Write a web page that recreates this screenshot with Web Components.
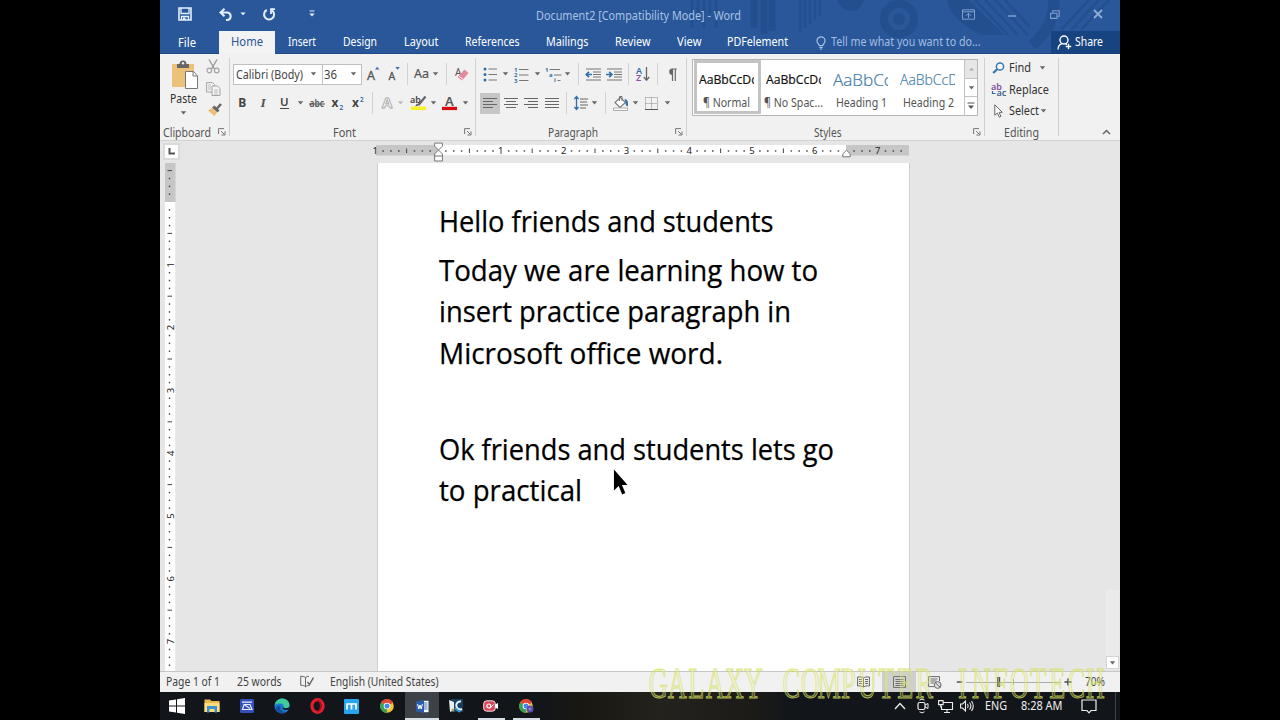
<!DOCTYPE html>
<html lang="en">
<head>
<meta charset="utf-8">
<title>Document2 - Word</title>
<style>
  body {
    margin: 0;
    width: 1280px;
    height: 720px;
    overflow: hidden;
    background: #000;
    font-family: "Noto Sans", "Open Sans", sans-serif;
    font-size: 12px;
    color: #444;
  }
</style>
</head>
<body>
<word-window></word-window>

<script>
// icons: [width, height, markup]
const T = 'font-family="Noto Sans,sans-serif"';
const ICONS = {
  sep: [1, 22, '<path d="M.5 0v22" stroke="#d2d2d2"/>'],
  arrow: [7, 4, '<path d="M.8 .3h5.4L3.5 3.4z" fill="#666"/>'],
  arrowLight: [7, 4, '<path d="M.8 .3h5.4L3.5 3.4z" fill="#bbb"/>'],
  arrowWhite: [6, 4, '<path d="M.3 .5h5.4L3 3.3z" fill="#e8f2ff"/>'],
  launcher: [8, 8, '<path d="M.6 6V.6H6M3 3l3.5 3.5M7 3.4V7H3.4" fill="none" stroke="#777"/>'],
  save: [14, 14, '<path d="M1 1h12v12H1z" fill="none" stroke="#e3f1ff" stroke-width="1.6"/><path d="M3 1v5.5h8V1M3.5 13V9.500h7V13" fill="none" stroke="#e3f1ff" stroke-width="1.3"/><path d="M5 10.5h2.5V13H5z" fill="#e3f1ff"/>'],
  undo: [14, 13, '<path d="M5.5 .8L1.5 4.5l4 3.7M2 4.5h6.5a3.8 3.8 0 0 1 0 7.5H7" fill="none" stroke="#e3f1ff" stroke-width="2"/>'],
  redo: [14, 13, '<path d="M4.8 2A5 5 0 1 0 10 2.4" fill="none" stroke="#e3f1ff" stroke-width="2"/><path d="M13 1.2H9V6" fill="none" stroke="#e3f1ff" stroke-width="1.8"/>'],
  customize: [6, 8, '<path d="M.5 1h5" stroke="#e3f1ff"/><path d="M.3 3.5h5.4L3 6.5z" fill="#e3f1ff"/>'],
  ribbonOpts: [13, 11, '<path d="M.5 .8h12v9.4H.5zM.5 2.8h12M6.5 9V4.5M4 6.8l2.5-2.5L9 6.8" fill="none" stroke="#7f9fcd"/>'],
  minimize: [8, 10, '<path d="M0 7h8" stroke="#7f9fcd" stroke-width="1.5"/>'],
  restore: [10, 9, '<path d="M.6 3.2h6.4v5.200H.6zM2.8 3V.8h6.400v5.400H7.2" fill="none" stroke="#7f9fcd" stroke-width="1.1"/>'],
  close: [10, 10, '<path d="M1 1l8 8M9 1L1 9" stroke="#8dabd6" stroke-width="1.9"/>'],
  bulb: [10, 14, '<path d="M3.2 9.5C3 8 1 7.5 1 4.8a4 4 0 0 1 8 0C9 7.5 7 8 6.8 9.5zM3.3 11.3h3.4M3.8 13h2.4" fill="none" stroke="#a9c3e6" stroke-width="1.2"/>'],
  share: [15, 15, '<circle cx="7" cy="5" r="4" fill="none" stroke="#fff" stroke-width="1.4"/><path d="M1 14.5c.2-4 2-5.3 4-5.8M8.5 8.6l1.5 1M11.5 8.8v5.4M8.8 11.5h5.4" fill="none" stroke="#fff" stroke-width="1.3"/>'],
  paste: [28, 30, '<path d="M1 4h22v23H1z" fill="#ecc27a"/><path d="M6 4h12v4H6z" fill="#666"/><path d="M8.5 4a3.5 3.5 0 0 1 7 0z" fill="#666"/><circle cx="12" cy="3.3" r="1.2" fill="#eee"/><path d="M14.5 11.5h8l4 4.5v12.5h-12z" fill="#fff" stroke="#777"/><path d="M22 11.5V16h4.5" fill="none" stroke="#777"/>'],
  cut: [14, 15, '<path d="M3 .5l5.5 9.5M11 .5L5.5 10" stroke="#999" stroke-width="1.4"/><circle cx="3.3" cy="11.5" r="2.3" fill="none" stroke="#a5a5a5" stroke-width="1.2"/><circle cx="10.7" cy="11.5" r="2.3" fill="none" stroke="#a5a5a5" stroke-width="1.2"/>'],
  copy: [15, 14, '<path d="M.6.6h6L8.5 2.5v7.5H.6z" fill="#f4f4f4" stroke="#a3a3a3"/><path d="M6 4h5.5L14 6.5v7H6z" fill="#f4f4f4" stroke="#a3a3a3"/><path d="M2 3h3M2 5h3M2 7h3M8 8h4M8 10h4M8 12h4" stroke="#b0b0b0" stroke-width=".8"/>'],
  painter: [15, 14, '<path d="M1 7.5L5 5l5 4.5L7.5 13z" fill="#ecbd72"/><path d="M5 4.5L7.5 2.5l5 5L10.5 9.5z" fill="#666"/><path d="M10 5.5L14 1" stroke="#666" stroke-width="2.5"/>'],
  growFont: [13, 16, `<text x="1" y="13.500" ${T} font-size="12.5" fill="#555" stroke="#555" stroke-width=".3">A</text><path d="M9 3.500h4.400L11.200.8z" fill="#3a6ea5"/>`],
  shrinkFont: [12, 16, `<text x="1.500" y="13.500" ${T} font-size="10.5" fill="#555" stroke="#555" stroke-width=".3">A</text><path d="M8.400 1h4.400L10.600 3.700z" fill="#3a6ea5"/>`],
  changeCase: [15, 14, `<text x="0" y="11" ${T} font-size="12" fill="#555" stroke="#555" stroke-width=".2" textLength="15" lengthAdjust="spacingAndGlyphs">Aa</text>`],
  eraser: [14, 15, `<text x="0" y="9" ${T} font-size="10" fill="#555">A</text><path d="M9.5 2.5l4 3.5L7 13.5 2.5 10z" fill="#e58a9d"/><path d="M3.5 8.8l4.7 3.7" stroke="#fff" stroke-width=".8"/>`],
  bold: [9, 14, `<text x="0.3" y="11" ${T} font-size="12" font-weight="700" fill="#444">B</text>`],
  italic: [7, 14, '<text x="0.500" y="11" font-family="Liberation Serif,serif" font-size="13.5" font-weight="700" font-style="italic" fill="#555">I</text>'],
  underline: [9, 14, `<text x="0" y="10" ${T} font-size="11.5" font-weight="600" fill="#444">U</text><path d="M0 12.500h9" stroke="#444"/>`],
  strike: [16, 14, `<text x=".5" y="11" ${T} font-size="10" font-weight="600" fill="#555" textLength="14.5" lengthAdjust="spacingAndGlyphs">abc</text><path d="M0 8h16" stroke="#555"/>`],
  subscript: [12, 14, `<text x="-.5" y="11" ${T} font-size="12" font-weight="700" fill="#444">x</text><text x="7.500" y="13.5" ${T} font-size="6.5" font-weight="600" fill="#2d66a8">2</text>`],
  superscript: [12, 14, `<text x="0" y="11" ${T} font-size="12" font-weight="700" fill="#444">x</text><text x="8" y="6" ${T} font-size="6.5" font-weight="600" fill="#2d66a8">2</text>`],
  effects: [13, 14, '<text x="1" y="12" font-family="Open Sans,sans-serif" font-size="15" font-weight="700" fill="#f8f8f8" stroke="#aaa" stroke-width=".9">A</text>'],
  highlight: [17, 16, `<text x="0" y="8" ${T} font-size="9" font-weight="600" fill="#444">ab</text><path d="M15.5 1.5L8.5 10" stroke="#666" stroke-width="2.2"/><path d="M5 11.5l2-3 2 1.8z" fill="#555"/><path d="M1 11.500h15v3.600H1z" fill="#f6f22a"/>`],
  fontColor: [15, 16, `<text x="3" y="11" ${T} font-size="13" font-weight="600" fill="#555">A</text><path d="M0 11.8h15v3.3H0z" fill="#d80c10"/>`],
  bullets: [14, 15, '<g fill="#2f6faa"><circle cx="2" cy="2" r="1.5"/><circle cx="2" cy="7.5" r="1.5"/><circle cx="2" cy="13" r="1.5"/></g><path d="M5.5 2H14M5.5 7.5H14M5.5 13H14" stroke="#777" stroke-width="1.2"/>'],
  numbering: [15, 15, `<g ${T} font-size="6" font-weight="700" fill="#2f6faa"><text x="0" y="4.5">1</text><text x="0" y="10">2</text><text x="0" y="15.5">3</text></g><path d="M5 2.5h9.5M5 8h9.5M5 13.5h9.5" stroke="#777"/>`],
  multilevel: [17, 15, `<g ${T} font-size="6" font-weight="700" fill="#2f6faa"><text x="0" y="4.5">1</text><text x="4" y="10">a</text><text x="9" y="15">i</text></g><path d="M4.5 2.5H15M9 8h7.5M12.5 13.5h3" stroke="#777"/>`],
  outdent: [16, 13, '<path d="M1 1h15M8 4h8M8 6.5h8M8 9h8M1 12h15" stroke="#777" stroke-width="1.1"/><path d="M7 6.5H1.5M4 3.8L1.3 6.5 4 9.2" fill="none" stroke="#2f6faa" stroke-width="1.7"/>'],
  indent: [16, 13, '<path d="M1 1h15M8 4h8M8 6.5h8M8 9h8M1 12h15" stroke="#777" stroke-width="1.1"/><path d="M0 6.5h5.5M3.2 3.8L5.9 6.5 3.2 9.2" fill="none" stroke="#2f6faa" stroke-width="1.7"/>'],
  sort: [14, 16, `<text x="0" y="7.5" ${T} font-size="9" font-weight="600" fill="#2f6faa">A</text><text x="0" y="15" ${T} font-size="9" font-weight="600" fill="#8653a5">Z</text><path d="M10.5 1v13M7.8 11l2.7 3.2 2.7-3.2" fill="none" stroke="#666" stroke-width="1.3"/>`],
  pilcrow: [10, 13, '<path d="M5.2 1H9.8M5.5 1v12M8.3 1v12" stroke="#666" stroke-width="1.2"/><path d="M5.5.5a3.3 3.3 0 0 0 0 6.6z" fill="#666"/>'],
  left: [14, 12, '<path d="M0 1.5h14M0 4.5h10M0 7.5h14M0 10.5h10" stroke="#666"/>'],
  center: [14, 12, '<path d="M0 1.5h14M2 4.5h10M0 7.5h14M2 10.5h10" stroke="#666"/>'],
  right: [14, 12, '<path d="M0 1.5h14M4 4.5h10M0 7.5h14M4 10.5h10" stroke="#666"/>'],
  justify: [14, 12, '<path d="M0 1.5h14M0 4.5h14M0 7.5h14M0 10.5h14" stroke="#666"/>'],
  spacing: [14, 16, '<path d="M6 4h8M6 7h7M6 10h8M6 13h6" stroke="#666"/><path d="M2.5 1.5v13M.4 4L2.5 1.6 4.6 4M.4 12l2.1 2.4L4.6 12" fill="none" stroke="#2f6faa" stroke-width="1.3"/>'],
  shading: [16, 15, '<path d="M2 6.5L7.5 1.5l5 5L7 11.5z" fill="#fff" stroke="#777" stroke-width="1.1"/><path d="M6.5 5V.5h2.5V5" fill="none" stroke="#777"/><path d="M11.500 3c3.500 0 4 4.500 3.300 7.500-2.200-.5-2.300-3-2.300-4.500z" fill="#2f6faa"/><path d="M.5 12h14v2.5H.5z" fill="#fff" stroke="#999" stroke-width=".8"/>'],
  borders: [13, 13, '<path d="M.5.500h12M.5 6.500h12M.5.500v11M6.500.500v11M12.500.500v11" stroke="#888" stroke-dasharray="1 1"/><path d="M0 12.5h13" stroke="#555"/>'],
  find: [13, 12, '<circle cx="8" cy="4.5" r="3.6" fill="#f6faff" stroke="#3a75ae" stroke-width="1.5"/><path d="M5.3 7L1.2 11" stroke="#3a75ae" stroke-width="2.2"/>'],
  replace: [16, 15, `<text x="0" y="7.5" ${T} font-size="9" font-weight="600" fill="#8050a0">ab</text><text x="5.5" y="14" ${T} font-size="9" font-weight="600" fill="#44618b">ac</text><path d="M1.5 9v2.5H4.5" fill="none" stroke="#2f6faa" stroke-width="1.2"/>`],
  select: [9, 14, '<path d="M.8.8v10.4l2.6-2.2 1.9 4.2 1.6-.8L5.1 8.3H8.3z" fill="#fff" stroke="#666"/>'],
  collapse: [9, 6, '<path d="M1 5l3.5-3.5L8 5" fill="none" stroke="#666" stroke-width="1.5"/>'],
  proof: [15, 14, '<path d="M5.5 2.5C4 1.5 2.5 1.3.7 1.3v9c2 0 3.5.3 4.8 1.5V2.5c1-.8 2-1.2 3.5-1.2M5.5 11.8c1-.8 2-1.3 4-1.4" fill="none" stroke="#666"/><path d="M7.5 7l2 2.5L13.5 2.5" fill="none" stroke="#666" stroke-width="1.5"/>'],
  readMode: [13, 12, '<path d="M6.500 2C5 .8 3 .8.6 1v9c2.400-.2 4-.2 5.900 1 1.900-1.200 3.500-1.200 5.900-1V1C10 .8 8 .8 6.500 2v9M2 3.500h3M2 5.500h3M2 7.500h3M8 3.500h3M8 5.500h3M8 7.500h3" fill="none" stroke="#666"/>'],
  printLayout: [13, 12, '<path d="M.5.5h12v11H.5zM2.5 3.5h8M2.5 5.5h8M2.5 7.5h8M2.5 9.5h8" fill="none" stroke="#666" stroke-width=".9"/>'],
  webLayout: [14, 13, '<path d="M11.5 5V.6H.6v10H6M2.5 3h7M2.5 5h6M2.5 7H6" fill="none" stroke="#666"/><circle cx="9.7" cy="9" r="3.4" fill="#ddd" stroke="#666"/><path d="M7.5 7l4.5 4" stroke="#666"/>'],
  minus: [7, 8, '<path d="M.8 4h5.4" stroke="#444" stroke-width="1.4"/>'],
  plus: [8, 8, '<path d="M.5 4h7M4 .5v7" stroke="#444" stroke-width="1.4"/>'],
  slider: [96, 12, '<path d="M0 6.5h95" stroke="#999" stroke-width=".8"/><path d="M47.500 3v6" stroke="#999"/><path d="M31 1h3.200v10H31z" fill="#555"/>'],
  start: [16, 16, '<path d="M0 2.5L7 1.5V7.5H0zM8 1.3L16 0V7.5H8zM0 8.5H7V14.5L0 13.5zM8 8.5H16V16L8 14.7z" fill="#fff"/>'],
  explorer: [16, 14, '<path d="M.5.5h5.5L7.5 2H15.5V13H.5z" fill="#e9b94b"/><path d="M.5 4H15.5V13H.5z" fill="#ffdc7d"/><path d="M3 7h10v6.5H10.5V10H5.5v3.5H3z" fill="#3a93cf"/>'],
  scan: [14, 14, '<rect width="14" height="14" rx="1.5" fill="#3450b8"/><path d="M2 2.500h10v1.300H2z" fill="#e2ebff"/><path d="M4 5.500h6l2 5H2.500z" fill="none" stroke="#e2ebff" stroke-width="1.200"/><path d="M4 5.500l6 4" stroke="#e2ebff" stroke-width="1.200"/>'],
  edge: [16, 16, '<circle cx="8" cy="8" r="7.5" fill="#1c78cf"/><path d="M.6 7.5C1.5 2.5 5 .5 8.2.5c4.5 0 7.3 3.3 7.3 6.3 0 2.5-2 3.7-4 3.7-1.5 0-2.3-.5-2-1.5.6-1.5-.4-3.5-3-3.5C3.5 5.5 1.5 6 .6 7.5z" fill="#3fcb9b"/><path d="M6.5 8c-1 3 1 6 5 5.8-3 2.5-8 2-9.5-2C1.5 9 4 6.8 6.5 8z" fill="#124f9f"/><path d="M9.5 9.5c-.5 1.8 3.5 2.2 5.3.6" stroke="#101418" stroke-width="1.5" fill="none"/>'],
  opera: [15, 16, '<ellipse cx="7.5" cy="8" rx="5.6" ry="6.3" fill="none" stroke="#e31f2d" stroke-width="3.2"/><path d="M7.5 2.5c4 1 4 10 0 11" fill="none" stroke="#a30f1b" stroke-width="1.3"/>'],
  maxthon: [15, 15, '<rect width="15" height="15" rx="1" fill="#27a5ee"/><path d="M3 10.500V5h9v5.500M7.500 5.500V10.500" fill="none" stroke="#fff" stroke-width="1.700"/>'],
  chrome: [14, 14, '<circle cx="7" cy="7" r="6.8" fill="#f5c431"/><path d="M7 7L1 3.6A6.8 6.8 0 0 1 13 3.7z" fill="#df4538"/><path d="M7 7L1 3.6A6.8 6.8 0 0 0 7 13.8z" fill="#38a157"/><circle cx="7" cy="7" r="3.3" fill="#fff"/><circle cx="7" cy="7" r="2.5" fill="#4687ee"/>'],
  word: [13, 13, '<path d="M6 .8h6.5v11.4H6z" fill="#f4f8ff"/><path d="M8 3h3.5M8 5h3.5M8 7h3.5M8 9h3.5" stroke="#2a5699" stroke-width=".8"/><path d="M0 1.5L8 0v13L0 11.5z" fill="#2b5bab"/><path d="M1.6 4l1.2 5L4 5l1.2 4 1.2-5" fill="none" stroke="#fff" stroke-width="1"/>'],
  media: [15, 14, '<path d="M2 0h12v13H2z" fill="#183c5e"/><path d="M0 1l5 2v8l-4 2z" fill="#e8eef0"/><path d="M12 2.5a4 4 0 1 0 1 7.5" fill="none" stroke="#e5f3fb" stroke-width="2"/><path d="M6 9l5 4" stroke="#3d9ed4" stroke-width="2"/><circle cx="4" cy="11" r="1.5" fill="#b89d55"/>'],
  recorder: [16, 12, '<rect x=".7" y=".8" width="11.6" height="10.4" rx="3" fill="#d6475a" stroke="#fadde0"/><path d="M12 4.5l3-1.5v6l-3-1.5z" fill="#fff"/><circle cx="5.8" cy="6" r="2" fill="none" stroke="#fff" stroke-width="1.2"/><path d="M7.8 7.5l2.5-3" stroke="#fff"/>'],
  chevronUp: [12, 8, '<path d="M1 7l5-5.5L11 7" fill="none" stroke="#eee" stroke-width="1.3"/>'],
  camera: [12, 16, '<rect x="1" y="4.5" width="7" height="7" rx="1.5" fill="none" stroke="#eee" stroke-width="1.2"/><path d="M8 7l3-1.5v5L8 9M2.5 2.2Q5 0 7.5 2.2M2.5 13.8Q5 16 7.5 13.8" fill="none" stroke="#eee"/>'],
  network: [15, 13, '<path d="M5 2.5h9.5v7H3.5V6M6 12.5h6M9 9.5v3M.6.6h4.5v4H.6zM2.8 4.6v3" fill="none" stroke="#eee" stroke-width="1.1"/>'],
  volume: [14, 12, '<path d="M.6 4h2L5.5 1v10L2.6 8h-2zM7.5 4q1.5 2 0 4M9.5 2.5q2.8 3.5 0 7M11.5 1q3.5 5 0 10" fill="none" stroke="#eee" stroke-width="1.1"/>'],
  notice: [16, 15, '<path d="M1 1h14v10.5H10L8 13.8 6 11.5H1z" fill="none" stroke="#eee" stroke-width="1.2"/>'],
  scrollUp: [7, 4, '<path d="M1 3.5h5L3.5.8z" fill="#aaa"/>'],
  more: [8, 8, '<path d="M.5 1h7" stroke="#555"/><path d="M1 3.5h6L4 7z" fill="#555"/>'],
  marker: [9, 19, '<path d="M.6.6h7.8v3L4.5 7.5.6 3.6zM4.5 7.5l3.9 4v7H.6v-7zM.6 13.5h7.8" fill="#fff" stroke="#777"/>'],
  markerRight: [9, 8, '<path d="M4.5.8l3.7 3.5v3H.8v-3z" fill="#fff" stroke="#777"/>'],
  pointer: [16, 28, '<path d="M1 .5V23l5-4.800L9.800 27l3.300-1.400L9.500 17h6z" transform="scale(.94)" fill="#000"/>']
};
ICONS.chrome2 = [15, 14, ICONS.chrome[2] + '<circle cx="11" cy="10" r="3.5" fill="#5d4cae"/><path d="M11 8.5v3M9.5 10h3" stroke="#aab" stroke-width=".8"/>'];

// icon centred in a cell of a given width
class WdIcon extends HTMLElement {
  constructor() {
    super();
    this.attachShadow({ mode: 'open' });
  }
  connectedCallback() {
    const [w, h, body] = ICONS[this.getAttribute('name')];
    const cell = this.getAttribute('w') || w;
    this.shadowRoot.innerHTML = `
      <style>
        :host { display: flex; flex: none; width: ${cell}px; align-items: center; justify-content: center; }
        svg { display: block; flex: none; overflow: visible; }
      </style>
      <svg width="${w}" height="${h}" viewBox="0 0 ${w} ${h}">${body}</svg>`;
  }
}
customElements.define('wd-icon', WdIcon);

// one line of text, condensed or stretched to "w" pixels
class FitText extends HTMLElement {
  constructor() {
    super();
    this.attachShadow({ mode: 'open' }).innerHTML = `
      <style>
        :host { display: block; flex: none; white-space: nowrap; }
        span { display: inline-block; transform-origin: 0 50%; }
      </style>
      <span><slot></slot></span>`;
  }
  connectedCallback() {
    const w = Number(this.getAttribute('w'));
    const span = this.shadowRoot.querySelector('span');
    this.style.width = w + 'px';
    this.style.marginLeft = (this.getAttribute('gap') || 0) + 'px';
    span.style.transform = `scaleX(${w / span.getBoundingClientRect().width})`;
  }
}
customElements.define('fit-text', FitText);

class TitleBar extends HTMLElement {
  constructor() {
    super();
    let stripes = '';
    for (let i = 0; i < 5; i++) stripes += `M${692 + i * 6 - 160} 0v${i % 2 ? 14 : 28}`;
    for (let i = 0; i < 5; i++) stripes += `M${800 + i * 5 - 160} 0v${32 - i * 4}`;
    this.attachShadow({ mode: 'open' }).innerHTML = `
      <style>
        :host { display: block; position: relative; height: 54px; background: #29579a; color: #fff; box-sizing: border-box; border-bottom: 1px solid #1f4a87; }
        .art { position: absolute; left: 0; top: 0; }
        .row { display: flex; position: relative; height: 28px; align-items: center; }
        .title { color: #a9c2e4; line-height: 16px; padding-top: 3px; }
        .tabs { height: 23px; padding-top: 3px; align-items: stretch; line-height: 22px; }
        .home { width: 56px; margin-left: 23px; background: #f3f3f3; color: #2a5699; height: 23px; }
        .tell { color: #a3bde1; }
        .share { display: flex; width: 69px; margin-left: 71px; background: #174480; }
        .file { padding-top: 1px; }
      </style>
      <svg class="art" width="960" height="53">
        <g fill="none" stroke="#234f8f">
          <path d="${stripes}" stroke-width="2.5"/>
          <path d="M594 0v28M604 0v34M612 0v31" stroke-width="7"/>
          <circle cx="739" cy="19" r="15" stroke-width="8"/>
          <path d="M815 0l33 35M825 0l33 35M835 0l33 35M845 0l25 27M921 30l28-30M911 30l28-30M901 30l28-30" stroke-width="2.5"/>
          <path d="M894 0q0 28-22 45" stroke-width="11"/>
        </g>
        <path d="M677 0h27q-3 11-13 11t-14-11zM787 0h22l35 35h-22Q790 20 787 0z" fill="#234f8f"/>
        <circle cx="739" cy="19" r="6" fill="#234f8f"/>
      </svg>
      <div class="row">
        <wd-icon name="save" w="50"></wd-icon>
        <wd-icon name="undo" w="31"></wd-icon>
        <wd-icon name="arrowWhite" w="3"></wd-icon>
        <wd-icon name="redo" w="49"></wd-icon>
        <wd-icon name="customize" w="38"></wd-icon>
        <fit-text class="title" gap="205" w="205">Document2 [Compatibility Mode] - Word</fit-text>
        <wd-icon name="ribbonOpts" w="43" style="margin-left:206px"></wd-icon>
        <wd-icon name="minimize" w="44"></wd-icon>
        <wd-icon name="restore" w="42"></wd-icon>
        <wd-icon name="close" w="44"></wd-icon>
      </div>
      <div class="row tabs">
        <fit-text class="file" gap="18" w="18">File</fit-text>
        <div class="home" style="margin-left:23px"><fit-text gap="11.500" w="32">Home</fit-text></div>
        <fit-text gap="13.5" w="28">Insert</fit-text>
        <fit-text gap="26.5" w="34">Design</fit-text>
        <fit-text gap="27" w="34.5">Layout</fit-text>
        <fit-text gap="26.5" w="54.5">References</fit-text>
        <fit-text gap="26.5" w="42.5">Mailings</fit-text>
        <fit-text gap="26.5" w="35.5">Review</fit-text>
        <fit-text gap="26.5" w="24.5">View</fit-text>
        <fit-text gap="26" w="61">PDFelement</fit-text>
        <wd-icon name="bulb" w="10" style="margin-left:27.5px"></wd-icon>
        <fit-text class="tell" gap="5" w="149.5">Tell me what you want to do...</fit-text>
        <div class="share"><wd-icon name="share" w="27"></wd-icon><fit-text gap="-3" w="28">Share</fit-text></div>
      </div>`;
  }
}
customElements.define('title-bar', TitleBar);

// ribbon group: content rows, then a caption
class RibbonGroup extends HTMLElement {
  constructor() {
    super();
    this.attachShadow({ mode: 'open' }).innerHTML = `
      <style>
        :host { display: flex; flex: none; flex-direction: column; justify-content: space-between; box-sizing: border-box; height: 86px;
          background: linear-gradient(#d0d0d0, #d0d0d0) right 4px / 1px 78px no-repeat; }
        .caption { display: flex; height: 16px; align-items: center; color: #555; }
      </style>
      <slot></slot>
      <div class="caption"><slot name="caption"></slot></div>`;
  }
}
customElements.define('ribbon-group', RibbonGroup);

class StyleTile extends HTMLElement {
  constructor() {
    super();
    this.attachShadow({ mode: 'open' }).innerHTML = `
      <style>
        :host { display: flex; flex: none; flex-direction: column; box-sizing: border-box; width: 67.3px; height: 54px; border: 3px solid transparent; padding: 0 0 0 1.5px; }
        :host([selected]) { border-color: #c3c3c3; }
        .sample { width: 55px; height: 32px; line-height: 34px; overflow: hidden; color: #111; font-family: "Open Sans", sans-serif; -webkit-text-stroke: .2px; }
        :host([heading]) .sample { color: #3f7ca8; font-weight: 300; }
        .label { line-height: 16px; height: 16px; color: #555; }
      </style>
      <div class="sample"><slot name="sample"></slot></div>
      <div class="label"><slot></slot></div>`;
  }
}
customElements.define('style-tile', StyleTile);

class WordRibbon extends HTMLElement {
  constructor() {
    super();
    const cells = list => list.map(([name, w]) => `<wd-icon name="${name}" w="${w}"></wd-icon>`).join('');
    this.attachShadow({ mode: 'open' }).innerHTML = `
      <style>
        :host { display: flex; height: 87px; background: #f1f1f1; border-bottom: 1px solid #d2d2d2; box-sizing: border-box; }
        .rows { display: flex; flex-direction: column; gap: 5px; padding: 8px 0 0 3px; }
        .rows.para { padding-left: 4px; }
        .row { display: flex; height: 24px; align-items: center; }
        .box { display: flex; box-sizing: border-box; height: 21px; align-items: center; background: #fff; border: 1px solid #c0c0c0; margin-right: -1px; }
        .on { background: #c6c6c6; height: 21px; display: flex; }
        .clip { display: flex; height: 69px; }
        .big { width: 43px; display: flex; flex-direction: column; padding-top: 6px; color: #333; }
        .tools { display: flex; flex-direction: column; gap: 7.5px; padding-top: 5px; }
        .gallery { display: flex; box-sizing: border-box; width: 286px; height: 57px; margin: 5px 0 0 5px; background: #fff; border: 1px solid #b5b5b5; padding-left: 1px; }
        .scroll { display: flex; flex-direction: column; width: 13px; margin-left: auto; }
        .scroll div { flex: 1; display: flex; border-left: 1px solid #c3c3c3; border-bottom: 1px solid #c3c3c3; justify-content: center; }
        .scroll div:first-child { background: #e6e6e6; }
        .scroll div:last-child { border-bottom: 0; }
        .edit { display: flex; flex-direction: column; padding-top: 3px; color: #333; }
        .edit .row { height: 21.5px; }
        .end { display: flex; flex: 1; align-items: flex-end; justify-content: flex-end; padding: 0 9px 5px 0; }
      </style>
      <ribbon-group style="width:70px">
        <div class="clip">
          <div class="big">
            <wd-icon name="paste" w="50"></wd-icon>
            <fit-text gap="10" w="27" style="line-height:18px">Paste</fit-text>
            <wd-icon name="arrow" w="46" style="padding-top:3px"></wd-icon>
          </div>
          <div class="tools">
            <wd-icon name="cut" w="20"></wd-icon>
            <wd-icon name="copy" w="20"></wd-icon>
            <wd-icon name="painter" w="22"></wd-icon>
          </div>
        </div>
        <fit-text slot="caption" gap="3" w="48">Clipboard</fit-text>
        <wd-icon slot="caption" name="launcher" style="margin-left:6.5px"></wd-icon>
      </ribbon-group>
      <ribbon-group style="width:246px">
        <div class="rows">
          <div class="row">
            <div class="box" style="width:89.5px"><fit-text gap="2" w="67">Calibri (Body)</fit-text><wd-icon name="arrow" w="20"></wd-icon></div>
            <div class="box" style="width:40.5px"><fit-text gap="1" w="13">36</fit-text><wd-icon name="arrow" w="34"></wd-icon></div>
            ${cells([['growFont', 22], ['shrinkFont', 20], ['sep', 8], ['changeCase', 20], ['arrow', 8], ['sep', 14], ['eraser', 17]])}
          </div>
          <div class="row">${cells([['bold', 19], ['italic', 23], ['underline', 18], ['arrow', 14], ['strike', 19], ['subscript', 23], ['superscript', 17],
            ['sep', 13], ['effects', 16], ['arrowLight', 10], ['highlight', 26], ['arrow', 4], ['fontColor', 29], ['arrow', 2]])}</div>
        </div>
        <fit-text slot="caption" gap="103" w="23">Font</fit-text>
        <wd-icon slot="caption" name="launcher" style="margin-left:108px"></wd-icon>
      </ribbon-group>
      <ribbon-group style="width:211px">
        <div class="rows para">
          <div class="row">${cells([['bullets', 19], ['arrow', 13], ['numbering', 19], ['arrow', 12], ['multilevel', 21], ['arrow', 7], ['sep', 15],
            ['outdent', 14], ['indent', 27], ['sep', 2], ['sort', 28], ['sep', 1], ['pilcrow', 27]])}</div>
          <div class="row"><div class="on">${cells([['left', 20]])}</div>${cells([['center', 21], ['right', 20], ['justify', 22], ['sep', 7], ['spacing', 22],
            ['arrow', 5], ['sep', 17], ['shading', 13], ['arrow', 17], ['borders', 15], ['arrow', 17]])}</div>
        </div>
        <fit-text slot="caption" gap="72" w="50">Paragraph</fit-text>
        <wd-icon slot="caption" name="launcher" style="margin-left:76.5px"></wd-icon>
      </ribbon-group>
      <ribbon-group style="width:298px">
        <div class="gallery">
          <style-tile selected><fit-text slot="sample" w="58">AaBbCcDc</fit-text><fit-text gap="4" w="47">¶ Normal</fit-text></style-tile>
          <style-tile><fit-text slot="sample" w="58">AaBbCcDc</fit-text><fit-text gap="-1.5" w="59">¶ No Spac...</fit-text></style-tile>
          <style-tile heading><fit-text slot="sample" w="59" style="font-size:16px">AaBbCc</fit-text><fit-text gap="2.500" w="51">Heading 1</fit-text></style-tile>
          <style-tile heading><fit-text slot="sample" w="58" style="font-size:14px">AaBbCcD</fit-text><fit-text gap="2.500" w="51">Heading 2</fit-text></style-tile>
          <div class="scroll">
            <div><wd-icon name="scrollUp"></wd-icon></div>
            <div><wd-icon name="arrow"></wd-icon></div>
            <div><wd-icon name="more"></wd-icon></div>
          </div>
        </div>
        <fit-text slot="caption" gap="127" w="27.5">Styles</fit-text>
        <wd-icon slot="caption" name="launcher" style="margin-left:131.5px"></wd-icon>
      </ribbon-group>
      <ribbon-group style="width:74px">
        <div class="edit">
          <div class="row"><wd-icon name="find" w="27"></wd-icon><fit-text gap="-3" w="22">Find</fit-text><wd-icon name="arrow" w="22"></wd-icon></div>
          <div class="row"><wd-icon name="replace" w="27"></wd-icon><fit-text gap="-3" w="40">Replace</fit-text></div>
          <div class="row"><wd-icon name="select" w="27"></wd-icon><fit-text gap="-3" w="30">Select</fit-text><wd-icon name="arrow" w="8"></wd-icon></div>
        </div>
        <fit-text slot="caption" gap="18.5" w="35">Editing</fit-text>
      </ribbon-group>
      <div class="end"><wd-icon name="collapse"></wd-icon></div>`;
  }
}
customElements.define('word-ribbon', WordRibbon);

const INCH = 62.8;

class WordRuler extends HTMLElement {
  constructor() {
    super();
    this.attachShadow({ mode: 'open' });
  }
  connectedCallback() {
    const vertical = this.hasAttribute('vertical');
    const length = vertical ? 508 : 533;
    const zero = vertical ? 39 : 62;
    const end = vertical ? length : 470;
    let marks = '';
    for (let i = vertical ? -4 : -8; i < 68; i++) {
      const p = zero + i * INCH / 8;
      if (i === 0 || p > length - 4 || (!vertical && Math.abs(p - end) < 3)) continue;
      if (i % 8 === 0) {
        marks += `<text x="${p}" y="9" text-anchor="middle">${Math.abs(i / 8)}</text>`;
      } else if (i % 4 === 0) {
        marks += `<path d="M${p} 3.5v4.5" stroke="#444"/>`;
      } else {
        marks += `<path d="M${p - .7} 6h1.5" stroke="#444" stroke-width="1.4"/>`;
      }
    }
    // the vertical ruler is the horizontal one turned, digits reading upwards
    const turned = vertical
      ? marks.replace(/<text x="([\d.]+)" y="9"/g, '<text transform="rotate(180 $1 5.5)" x="$1" y="9"')
      : marks;
    const w = vertical ? 10 : length, h = vertical ? length : 11;
    this.shadowRoot.innerHTML = `
      <style>
        :host { display: block; flex: none; }
        svg { display: block; overflow: visible; font: 9.5px "Noto Sans", sans-serif; fill: #222; }
      </style>
      <svg width="${w}" height="${h}">
        <g ${vertical ? 'transform="matrix(0 1 -1 0 10.5 0)"' : ''}>
          <path d="M0 0h${length}v10.5H0z" fill="#c6c6c6"/>
          <path d="M${zero} 0H${end}v10.5H${zero}z" fill="#fff"/>
          ${turned}
        </g>
        ${vertical ? '' : `<g transform="translate(58 -2.5)">${ICONS.marker[2]}</g><g transform="translate(466 4.5)">${ICONS.markerRight[2]}</g>`}
      </svg>`;
  }
}
customElements.define('word-ruler', WordRuler);

class WordPage extends HTMLElement {
  constructor() {
    super();
    this.attachShadow({ mode: 'open' }).innerHTML = `
      <style>
        :host { display: block; box-sizing: border-box; width: 533px; height: 508px; padding: 38.4px 0 0 61px; background: #fff; border: solid #cfcfcf; border-width: 0 1px;
          font: 28.5px/41.4px "Open Sans", sans-serif; color: #000; -webkit-text-stroke: .25px #000; }
        ::slotted(p) { margin: 0 0 6.9px; min-height: 41.4px; }
      </style>
      <slot></slot>`;
  }
}
customElements.define('word-page', WordPage);

class StatusBar extends HTMLElement {
  constructor() {
    super();
    this.attachShadow({ mode: 'open' }).innerHTML = `
      <style>
        :host { display: flex; box-sizing: border-box; height: 21px; background: #f1f1f1; border-top: 1px solid #c6c6c6; align-items: center; line-height: 19px; }
        fit-text { padding-bottom: 2px; }
        .on { display: flex; height: 20px; background: #cfcfcf; margin-left: 12px; }
      </style>
      <fit-text gap="6" w="54">Page 1 of 1</fit-text>
      <fit-text gap="17" w="44.500">25 words</fit-text>
      <wd-icon name="proof" w="52"></wd-icon>
      <fit-text gap="-3.5" w="108.500">English (United States)</fit-text>
      <wd-icon name="readMode" w="14" style="margin-left:417.500px"></wd-icon>
      <div class="on"><wd-icon name="printLayout" w="34"></wd-icon></div>
      <wd-icon name="webLayout" w="37"></wd-icon>
      <wd-icon name="minus" w="13"></wd-icon>
      <wd-icon name="slider" w="96"></wd-icon>
      <wd-icon name="plus" w="11"></wd-icon>
      <fit-text gap="12" w="20">70%</fit-text>`;
  }
}
customElements.define('status-bar', StatusBar);

class TaskBar extends HTMLElement {
  constructor() {
    super();
    const apps = ['start', 'explorer', 'scan', 'edge', 'opera', 'maxthon', 'chrome', 'word', 'media', 'recorder', 'chrome2'];
    const open = { word: 'app active', recorder: 'app open', chrome2: 'app open' };
    this.attachShadow({ mode: 'open' }).innerHTML = `
      <style>
        :host { display: flex; height: 28px; align-items: stretch; color: #f0f0f0; line-height: 28px;
          background: linear-gradient(90deg, transparent 380px, #191712 420px, #24221d 500px, #1d1b17 590px, transparent 630px), #12161a; }
        .app { display: flex; box-sizing: border-box; flex: none; width: 34.9px; }
        .active { background: linear-gradient(#d5dde5, #d5dde5) 0 26px / 100% 2px no-repeat, #3d4248; width: 34px; margin: 0 0 0 .9px; }
        .open { background: linear-gradient(#d5dde5, #d5dde5) 4px 26px / 27px 2px no-repeat; }
        .tray { display: flex; margin-left: auto; width: 231px; }
        .edge { border-left: 1px solid #444; margin-left: 18px; }
      </style>
      ${apps.map(name => `<div class="${open[name] || 'app'}"><wd-icon name="${name}" w="34.9"></wd-icon></div>`).join('')}
      <div class="tray">
        <wd-icon name="chevronUp" w="22"></wd-icon>
        <wd-icon name="camera" w="24"></wd-icon>
        <wd-icon name="network" w="21"></wd-icon>
        <wd-icon name="volume" w="22"></wd-icon>
        <fit-text gap="7" w="22">ENG</fit-text>
        <fit-text gap="14" w="41.5">8:28 AM</fit-text>
        <wd-icon name="notice" w="16" style="margin-left:18.5px"></wd-icon>
        <div class="edge"></div>
      </div>`;
  }
}
customElements.define('task-bar', TaskBar);

class WaterMark extends HTMLElement {
  constructor() {
    super();
    const text = 'GALAXY COMPUTER INFOTECH';
    // fixed pitch, so every glyph gets its own x
    const xs = [...text].map((c, i) => ((9.3 + i * 19) / .6).toFixed(1)).join(' ');
    this.attachShadow({ mode: 'open' }).innerHTML = `
      <style>
        :host { position: absolute; left: 649px; top: 660px; pointer-events: none; }
        svg { display: block; }
        text { font-family: "Liberation Serif", serif; font-size: 44px; fill: #e9f0a0; fill-opacity: .25; stroke: #d3df55; stroke-width: 1; stroke-opacity: .8; }
      </style>
      <svg width="470" height="44"><text transform="scale(.6 1)" x="${xs}" y="38" text-anchor="middle">${text}</text></svg>`;
  }
}
customElements.define('water-mark', WaterMark);

class WordWindow extends HTMLElement {
  constructor() {
    super();
    this.attachShadow({ mode: 'open' }).innerHTML = `
      <style>
        :host { display: block; width: 960px; height: 720px; margin: 0 auto; }
        .rulerbar { display: flex; height: 22px; background: #e6e6e6; }
        .corner { display: flex; box-sizing: border-box; width: 17px; height: 17px; margin: 2px 198px 0 3px; background: #fff; border: 2px solid #dadada; align-items: center; justify-content: center; }
        .corner svg { display: block; }
        .rulerbar word-ruler { margin: 4px 0 0 -2px; }
        .work { display: flex; height: 508px; background: #e6e6e6; overflow: hidden; }
        .work > word-ruler { margin-left: 5px; }
        word-page { margin-left: 202px; flex: none; }
        .scroll { display: flex; flex-direction: column; justify-content: flex-end; width: 13px; margin: 0 1px 2px auto; }
        .thumb { height: 66px; background: #ebebeb; }
        .down { display: flex; height: 13px; width: 13px; background: #fff; border: 1px solid #d5d5d5; box-sizing: border-box; }
        .pointer { position: absolute; left: 613px; top: 469px; }
      </style>
      <title-bar></title-bar>
      <word-ribbon></word-ribbon>
      <div class="rulerbar">
        <div class="corner"><svg width="7" height="7"><path d="M1.5 0v5.5H7" fill="none" stroke="#555" stroke-width="2"/></svg></div>
        <word-ruler></word-ruler>
      </div>
      <div class="work">
        <word-ruler vertical></word-ruler>
        <word-page>
          <p><fit-text w="334.500">Hello friends and students</fit-text></p>
          <p>
            <fit-text w="379">Today we are learning how to</fit-text>
            <fit-text w="352">insert practice paragraph in</fit-text>
            <fit-text w="284">Microsoft office word.</fit-text>
          </p>
          <p></p>
          <p>
            <fit-text w="395">Ok friends and students lets go</fit-text>
            <fit-text w="143">to practical</fit-text>
          </p>
        </word-page>
        <div class="scroll"><div class="thumb"></div><div class="down"><wd-icon name="arrow" w="11"></wd-icon></div></div>
      </div>
      <status-bar></status-bar>
      <task-bar></task-bar>
      <wd-icon class="pointer" name="pointer"></wd-icon>
      <water-mark></water-mark>`;
  }
}
customElements.define('word-window', WordWindow);
</script>
</body>
</html>
